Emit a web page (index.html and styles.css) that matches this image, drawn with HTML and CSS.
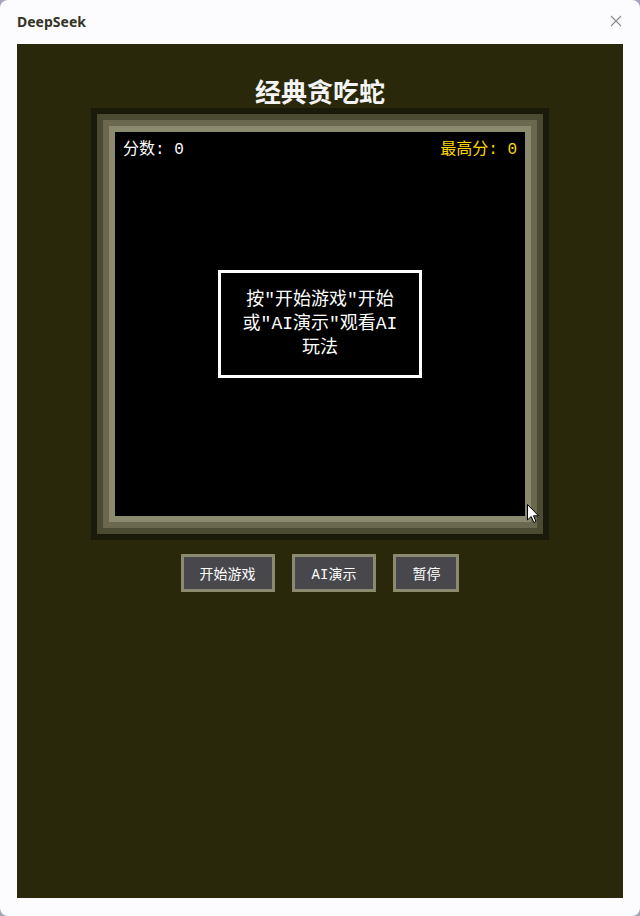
FILE: index.html
```html
<!DOCTYPE html>
<html lang="zh-CN">
<head>
    <meta charset="UTF-8">
    <meta name="viewport" content="width=device-width, initial-scale=1.0">
    <title>DeepSeek</title>
    <link rel="stylesheet" href="styles.css">
</head>
<body>
    <div class="window">
        <div class="titlebar">
            <span class="app-name">DeepSeek</span>
            <button class="close-btn" aria-label="关闭">
                <svg width="12" height="12" viewBox="0 0 12 12">
                    <path d="M1 1 L11 11 M11 1 L1 11" stroke="#8a8a8a" stroke-width="1.1" fill="none"/>
                </svg>
            </button>
        </div>

        <div class="game-panel">
            <h1 class="game-title">经典贪吃蛇</h1>

            <div class="board">
                <div class="scores">
                    <span class="score">分数: <span id="score">0</span></span>
                    <span class="high-score">最高分: <span id="high-score">0</span></span>
                </div>
                <div class="message" id="message">
                    按"开始游戏"开始<br>或"AI演示"观看AI<br>玩法
                </div>
            </div>

            <div class="controls">
                <button id="start-btn">开始游戏</button>
                <button id="ai-btn" class="ai-btn">AI演示</button>
                <button id="pause-btn">暂停</button>
            </div>
        </div>

        <!-- mouse pointer resting on the board edge -->
        <svg class="pointer" width="13" height="20" viewBox="0 0 13 20">
            <path d="M0.5 0.5 L0.5 16 L4.2 12.5 L6.8 18.5 L9 17.5 L6.5 11.8 L11.5 11.8 Z" fill="#fff" stroke="#000" stroke-width="1"/>
        </svg>
    </div>
</body>
</html>
```

FILE: styles.css
```css
* { box-sizing: border-box; }
html, body {
    margin: 0;
    height: 100%;
}
body {
    background: #a3a3bb;
    font-family: "Liberation Mono", "Noto Sans CJK SC", monospace;
}
.window {
    position: relative;
    height: 916px;
    background: #fcfcfe;
    border-radius: 8px;
    display: flex;
    flex-direction: column;
    padding: 0 17px 18px;
}
.titlebar {
    height: 44px;
    display: flex;
    align-items: center;
    justify-content: space-between;
    padding-bottom: 2px;
}
.app-name {
    font-family: "Noto Sans", "Liberation Sans", sans-serif;
    font-weight: 700;
    font-size: 14px;
    color: #333326;
}
.close-btn {
    background: none;
    border: none;
    padding: 0;
    margin-right: 1px;
    width: 12px;
    height: 12px;
    display: flex;
}
.game-panel {
    flex: 1;
    background: #29280a;
    display: flex;
    flex-direction: column;
    align-items: center;
    padding-top: 31px;
}
.game-title {
    margin: 0;
    font-family: "Noto Sans CJK SC", sans-serif;
    font-size: 26px;
    line-height: 32px;
    font-weight: 700;
    color: #f4f4f4;
}

/* canvas with its layered frame */
.board {
    margin-top: 19px;
    width: 422px;
    height: 396px;
    background: #000;
    border: 6px solid #8b8a70;
    box-shadow: 0 0 0 6px #6a6950, 0 0 0 12px #4b4a33, 0 0 0 18px #1a1a0b;
    display: grid;
    grid-template-areas: "stack";
}
.scores {
    grid-area: stack;
    align-self: start;
    display: flex;
    justify-content: space-between;
    padding: 8px 8px 0 8px;
    font-size: 16px;
    line-height: 20px;
}
.score { color: #fff; }
.high-score { color: #ffd700; }
.message {
    grid-area: stack;
    place-self: center;
    width: 204px;
    padding: 15px 10px;
    border: 3px solid #fff;
    color: #fff;
    font-size: 18px;
    line-height: 24px;
    text-align: center;
}

.controls {
    margin-top: 32px;
    display: flex;
    gap: 17px;
}
.controls button {
    height: 38px;
    padding: 0 16px;
    background: #48484c;
    border: 3px solid #8b8a70;
    color: #fff;
    font-family: "Liberation Mono", "Noto Sans CJK SC", monospace;
    font-size: 14px;
    cursor: pointer;
}
.controls .ai-btn { padding: 0 17px; }
.controls button:hover { background: #5a5a5e; }

.pointer {
    position: absolute;
    left: 527px;
    top: 504px;
}
```
